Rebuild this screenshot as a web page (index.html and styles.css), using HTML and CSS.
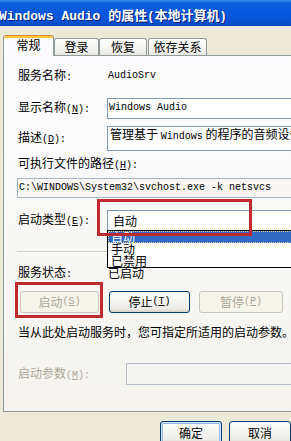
FILE: index.html
```html
<!DOCTYPE html>
<html lang="zh-CN">
<head>
<meta charset="utf-8">
<title>Windows Audio 的属性</title>
<link rel="stylesheet" href="styles.css">
</head>
<body>
<div class="titlebar"><span class="tm">Windows Audio </span>的属性<span class="tp">(</span>本地计算机<span class="tp">)</span></div>
<div class="tabs">
  <div class="tab active t1">常规</div>
  <div class="tab t2">登录</div>
  <div class="tab t3">恢复</div>
  <div class="tab t4">依存关系</div>
</div>
<div class="pane">
  <div class="row r1"><div class="lbl">服务名称<span class="m">:</span></div><div class="val m">AudioSrv</div></div>
  <div class="row r2"><div class="lbl">显示名称<span class="m">(<u>N</u>):</span></div><div class="box m">Windows Audio</div></div>
  <div class="row r3"><div class="lbl lbl-top">描述<span class="m">(<u>D</u>):</span></div><div class="box desc">管理基于 <span class="m">Windows</span> 的程序的音频设备。如果此服务被终止</div></div>
  <div class="r4">可执行文件的路径<span class="m">(<u>H</u>):</span></div>
  <div class="pathbox m">C:\WINDOWS\System32\svchost.exe -k netsvcs</div>
  <div class="row r6"><div class="lbl">启动类型<span class="m">(<u>E</u>):</span></div><div class="combo">自动</div></div>
  <div class="sep"></div>
  <div class="row r7"><div class="lbl">服务状态<span class="m">:</span></div><div class="val">已启动</div></div>
  <div class="btnrow">
    <div class="btn dis b-start">启动<span class="m">(<u>S</u>)</span></div>
    <div class="btn b-stop">停止<span class="m">(<u>T</u>)</span></div>
    <div class="btn dis b-pause">暂停<span class="m">(<u>P</u>)</span></div>
  </div>
  <div class="help">当从此处启动服务时，您可指定所适用的启动参数。</div>
  <div class="row r10"><div class="lbl lbl-wide dim">启动参数<span class="m">(<u>M</u>):</span></div><div class="box dbox"></div></div>

  <div class="droplist">
    <div class="item sel">自动</div>
    <div class="item">手动</div>
    <div class="item">已禁用</div>
  </div>
  <div class="mark mark1"></div>
  <div class="mark mark2"></div>
</div>
<div class="footer">
  <div class="btn def b-ok">确定</div>
  <div class="btn b-cancel">取消</div>
</div>
</body>
</html>
```
FILE: styles.css
```css
* { box-sizing: border-box; }
html, body { margin: 0; padding: 0; }
body {
  width: 291px;
  height: 441px;
  overflow: hidden;
  background: #ECE9D8;
  font-family: "Noto Sans CJK SC", sans-serif;
  font-size: 12px;
  line-height: 16px;
  color: #000;
}
.m {
  font-family: "Liberation Mono", monospace;
  font-size: 10px;
}
u { text-decoration: underline; text-underline-offset: 1px; }

.titlebar {
  height: 26px;
  padding-top: 5px;
  line-height: 20px;
  white-space: nowrap;
  overflow: hidden;
  background: linear-gradient(#3C8CF3 0%, #0D62E0 12%, #0858DE 45%, #0753D6 80%, #0A49C0 100%);
  color: #fff;
  font-weight: bold;
  font-size: 13px;
  text-shadow: 1px 1px 0 #0A1E7A;
  text-indent: -1px;
}
.tm { font-family: "Liberation Mono", monospace; font-size: 13px; font-weight: bold; }
.tp { font-family: "Liberation Mono", monospace; font-size: 12px; font-weight: bold; }

.tabs {
  height: 20px;
  margin-top: 9px;
  padding-left: 3px;
  display: flex;
  align-items: flex-end;
  position: relative;
  z-index: 2;
}
.tab {
  height: 17px;
  border: 1px solid #919B9C;
  border-bottom: none;
  border-radius: 3px 3px 0 0;
  background: linear-gradient(#FFFFFF, #F4F4F0 60%, #EAE9E3);
  display: flex;
  align-items: center;
  justify-content: center;
  line-height: 1;
}
.tab.active {
  height: 21px;
  margin-bottom: -1px;
  padding-bottom: 2px;
  background: #FCFCFE;
  border-top: 1px solid #E68B2C;
  box-shadow: inset 0 2px 0 #FFC83C;
}
.t1 { width: 51px; }
.t2 { width: 45px; }
.t3 { width: 48px; }
.t4 { width: 59px; margin-left: 1px; }

.pane {
  position: relative;
  margin-left: 3px;
  width: 330px;
  height: 357px;
  border: 1px solid #919B9C;
  background: linear-gradient(#FCFCFE, #F4F3EE);
  padding: 10px 0 0 14px;
}
.row { display: flex; align-items: center; }
.lbl { width: 89px; flex: none; white-space: nowrap; }
.lbl-wide { width: 108px; }
.dim { color: #ACA899; }
.val { padding-left: 1px; }
.r1 { height: 20px; }
.r2 { height: 21px; margin-top: 12px; }
.box {
  flex: 1;
  height: 100%;
  border: 1px solid #7F9DB9;
  background: #fff;
  padding: 2px 2px 0 1px;
  line-height: 14px;
  white-space: nowrap;
  overflow: hidden;
}
.r3 { height: 25px; margin-top: 7px; align-items: flex-start; }
.lbl-top { padding-top: 3px; }
.desc { padding-top: 0; padding-left: 2px; line-height: 14px; }
.r4 { height: 16px; margin-top: 4px; overflow: visible; }
.pathbox {
  margin-top: 7px;
  margin-left: -1px;
  height: 20px;
  border: 1px solid #A5B4C4;
  background: #F7F6F2;
  padding-left: 1px;
  line-height: 17px;
  white-space: nowrap;
}
.r6 { height: 21px; margin-top: 12px; }
.combo {
  flex: 1;
  height: 100%;
  border: 1px solid #7F9DB9;
  background: #fff;
  padding-left: 5px;
  line-height: 19px;
}
.sep {
  margin-top: 20px;
  margin-left: -1px;
  height: 2px;
  border-top: 1px solid #D0D0BF;
  border-bottom: 1px solid #FFFFFF;
}
.r7 { height: 16px; margin-top: 12px; }
.btnrow { display: flex; height: 22px; margin-top: 10px; }
.btn {
  height: 22px;
  border: 1px solid #003C74;
  border-radius: 3px;
  background: linear-gradient(#FFFFFF, #F3F3EF 50%, #ECEBE6 85%, #D6D0C5);
  display: flex;
  align-items: center;
  justify-content: center;
  line-height: 1;
}
.btn.dis {
  border-color: #C9C7BA;
  background: #F5F4EA;
  color: #ACA899;
}
.b-start { width: 79px; margin-left: 2px; }
.b-stop { width: 81px; margin-left: 10px; }
.b-pause { width: 84px; margin-left: 9px; }
.help { height: 16px; margin-top: 11px; white-space: nowrap; }
.r10 { height: 22px; margin-top: 23px; }
.dbox { background: transparent; border-color: #B5BEC8; }

.droplist {
  position: absolute;
  left: 103px;
  top: 174px;
  width: 230px;
  height: 38px;
  border: 1px solid #000;
  background: #fff;
  z-index: 3;
}
.item { height: 12px; line-height: 12px; padding-left: 3px; }
.item.sel {
  background: #316AC5;
  color: #fff;
  outline: 1px dotted #E8D89A;
  outline-offset: -1px;
}
.mark {
  position: absolute;
  border: 3px solid #BF2A30;
  z-index: 4;
}
.mark1 { left: 93px; top: 143px; width: 155px; height: 37px; }
.mark2 { left: 11px; top: 226px; width: 88px; height: 36px; }

.footer { display: flex; padding-left: 160px; margin-top: 9px; }
.footer .btn { height: 23px; }
.b-ok { width: 73px; box-shadow: inset 0 0 0 1px #CEE7FF, inset 0 0 0 2px #98B8EA; }
.b-cancel { width: 73px; margin-left: 7px; }
```
